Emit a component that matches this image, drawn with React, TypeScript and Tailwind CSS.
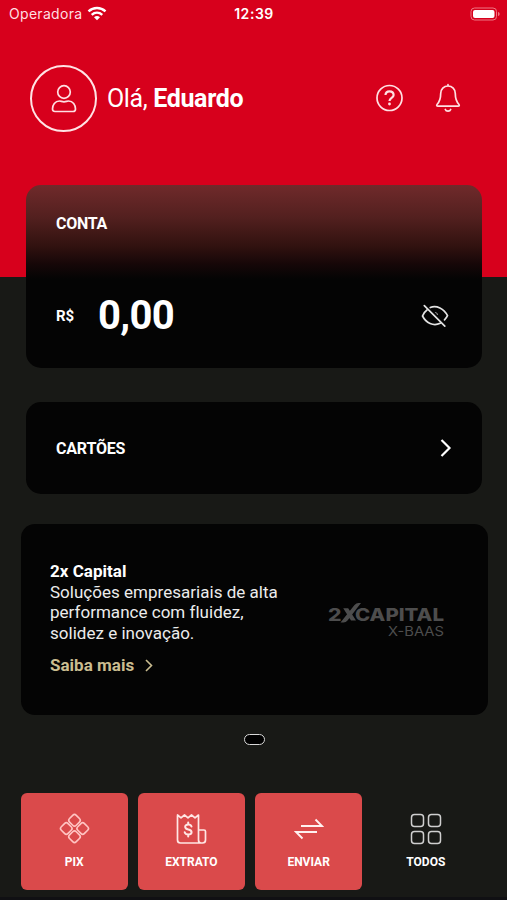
import type { ReactNode } from "react";

function StatusBar() {
  return (
    <div className="grid h-[27px] grid-cols-3 items-center pl-[9px] pr-[6px] font-['Inter',sans-serif] text-[14px] leading-none text-white">
      <div className="flex items-center gap-[5px]">
        <span className="tracking-[0.3px] text-[#ffdfe2]">Operadora</span>
        <svg width="20" height="15" viewBox="0 0 20 15" fill="none" stroke="currentColor" strokeWidth="2.4">
          <path d="M1.5 5.4C6.4.8 13.6.8 18.5 5.4" />
          <path d="M4.7 8.8c3.1-2.7 7.5-2.7 10.6 0" />
          <path d="M7 11.3a4.5 4.5 0 0 1 6 0L10 14.3z" fill="currentColor" stroke="none" />
        </svg>
      </div>
      <span className="pr-[2px] text-center font-semibold tracking-[0.55px]">12:39</span>
      <svg className="justify-self-end" width="31" height="14" viewBox="0 0 31 14" fill="none">
        <rect x="1" y="1" width="25.5" height="12" rx="3.5" stroke="#ee7783" />
        <rect x="3" y="3" width="21.5" height="8" rx="2" fill="white" />
        <path d="M28 5c2.200.6 2.200 3.400 0 4z" fill="#ee7783" />
      </svg>
    </div>
  );
}

function Action({ label, filled = true, children }: { label: string; filled?: boolean; children: ReactNode }) {
  return (
    <button
      className={`flex h-[97px] w-[107.500px] flex-col items-center rounded-[6px] pt-[18px] text-[12px] font-bold leading-[14px] text-white ${filled ? "bg-[#da4a4b]" : ""}`}
    >
      <span className="flex h-9 items-center justify-center">{children}</span>
      <span className="mt-[8px]">{label}</span>
    </button>
  );
}

export default function App() {
  return (
    <div className="flex h-[900px] w-[507px] flex-col overflow-hidden border-b-[3px] border-[#101013] bg-[#181916] font-['Roboto',sans-serif] text-white">
      <header className="h-[277px] shrink-0 bg-[#d7001c]">
        <StatusBar />
        <div className="mt-[37px] flex h-[68px] items-center pl-[30px] pr-[45px]">
          <div className="flex size-[67px] items-center justify-center rounded-full border-2 border-[#ffe3e5]">
            <svg className="mt-px" width="26" height="30" viewBox="0 0 26 30" fill="none" stroke="#ffe0e3" strokeWidth="1.7">
              <circle cx="13" cy="8" r="6.3" />
              <path d="M8.500 17c1.500 0 2.500.8 4.500.8s3-.8 4.500-.8c4.500 0 7 4 7 8 0 1.800-1 2.500-2.500 2.500H4C2.500 27.500 1.500 26.800 1.500 25c0-4 2.500-8 7-8z" />
            </svg>
          </div>
          <h1 className="ml-[10px] mt-[2px] flex-1 text-[25px] font-normal tracking-[-0.350px]">
            Olá, <b className="font-bold">Eduardo</b>
          </h1>
          <svg width="28" height="28" viewBox="0 0 28 28" fill="none" stroke="#ffe0e3" strokeWidth="1.700">
            <circle cx="14.500" cy="14" r="12.500" />
            <path d="M10.500 11c.1-2.400 1.700-3.700 4-3.700s4.100 1.400 4.100 3.600c0 3-4.100 2.900-4.100 6.100" strokeWidth="2.200" />
            <circle cx="14.500" cy="20" r="1.400" fill="#ffe0e3" stroke="none" />
          </svg>
          <svg className="ml-[31px]" width="28" height="30" viewBox="0 0 28 30" fill="none" stroke="#ffe0e3" strokeWidth="1.700" strokeLinejoin="round" strokeLinecap="round">
            <path d="M14 3C9.800 3 6.700 6 6.700 10.500c0 5-.6 7.500-3.500 10.700-.9 1-.5 2 .8 2h20c1.300 0 1.700-1 .8-2-2.900-3.200-3.500-5.700-3.500-10.700C21.300 6 18.200 3 14 3zM14 1.700V3" />
            <path d="M11.300 26.500c.8 2.200 4.600 2.200 5.400 0" />
          </svg>
        </div>
      </header>

      <section className="mx-[26px] -mt-[92px] h-[183px] w-[456px] shrink-0 rounded-[15px] bg-[linear-gradient(180deg,#702a2b_0px,#53201f_32px,#30110f_62px,#160708_79px,#040404_94px)] pl-[30px] pr-[33px] pt-[29px]">
        <h2 className="text-[16px] font-bold leading-[20px] tracking-[-0.3px]">CONTA</h2>
        <div className="mt-[57px] flex h-[50px] items-center">
          <span className="w-[42px] text-[15px] font-bold">R$</span>
          <span className="flex-1 text-[40px] font-bold leading-none tracking-[-0.7px]">0,00</span>
          <svg width="28" height="24" viewBox="0 0 28 24" fill="none" stroke="#e3e3e3" strokeWidth="1.700" strokeLinecap="round">
            <path d="M9.200 3.500C15.500.9 23 4.700 26.500 11.700c-.7 1.500-1.700 2.900-3 4.100M19.200 19.300C12.300 22.500 5 19 1.500 12c.9-2.500 2.400-4.500 4.500-6" />
            <path d="m3.300 1.700 20.500 20.500" />
            <path d="M14.500 8.500c1 .3 1.700 1 2 2" stroke="#888" strokeWidth="1.200" />
          </svg>
        </div>
      </section>

      <section className="mx-[26px] mt-[34px] flex h-[92px] w-[456px] shrink-0 items-center justify-between rounded-[15px] bg-[#040404] pl-[30px] pr-[30px]">
        <h2 className="pt-px text-[16px] font-bold tracking-[-0.200px]">CARTÕES</h2>
        <svg width="12" height="18" viewBox="0 0 12 18" fill="none" stroke="white" strokeWidth="2.200">
          <path d="m1.500 1 8 8-8 8" />
        </svg>
      </section>

      <section className="ml-[20.500px] mt-[29.500px] flex h-[191px] w-[467px] shrink-0 rounded-[14px] bg-[#040404] pl-[29.500px] pr-[42.500px] pt-[37.500px]">
        <div className="flex-1 whitespace-nowrap text-[17px] leading-[20.600px] tracking-[0.02px] text-[#ececec]">
          <h2 className="font-bold text-white">2x Capital</h2>
          <p>
            Soluções empresariais de alta
            <br />
            performance com fluidez,
            <br />
            solidez e inovação.
          </p>
          <a className="mt-[12px] flex items-center gap-[11px] font-bold text-[#cabd90]">
            Saiba mais
            <svg width="8" height="13" viewBox="0 0 8 13" fill="none" stroke="currentColor" strokeWidth="1.600">
              <path d="m1 1 5.500 5.500L1 12" />
            </svg>
          </a>
        </div>
        <svg className="mt-[38px]" width="117" height="40" viewBox="0 0 117 40" fill="#4d4d4d" fontFamily="Inter, sans-serif">
          <text x="0" y="21.500" fontSize="17" fontWeight="800" textLength="13.500" lengthAdjust="spacingAndGlyphs">2</text>
          <path d="M12.500 23.500 26.500 6Q28.300 4 30.500 4H33L19.500 21.500Q18 23.500 15.500 23.500zM15.200 9.200h5L28 21.500h-5z" />
          <text x="27" y="21.500" fontSize="17" fontWeight="800" textLength="89" lengthAdjust="spacingAndGlyphs">CAPITAL</text>
          <text x="60" y="36.500" fontSize="13.500" fontWeight="400" textLength="56" lengthAdjust="spacingAndGlyphs">X-BAAS</text>
        </svg>
      </section>

      <div className="ml-[243.500px] mt-[19px] h-[11px] w-[21px] shrink-0 rounded-full border-[1.500px] border-[#d8d8d8] bg-black" />

      <nav className="ml-[20.500px] mt-[48px] flex gap-[9.700px]">
        <Action label="PIX">
          <svg width="31" height="31" viewBox="0 0 32 32" fill="none" stroke="#ffc4c2" strokeWidth="1.700">
            <g transform="rotate(45 16 16)">
              <rect x="5.100" y="5.100" width="9.800" height="9.800" rx="2.600" />
              <rect x="17.100" y="5.100" width="9.800" height="9.800" rx="2.600" />
              <rect x="5.100" y="17.100" width="9.800" height="9.800" rx="2.600" />
              <rect x="17.100" y="17.100" width="9.800" height="9.800" rx="2.600" />
            </g>
          </svg>
        </Action>
        <Action label="EXTRATO">
          <svg width="31" height="32" viewBox="0 0 31 32" fill="none" stroke="#ffe7e5" strokeWidth="1.700" strokeLinejoin="round" strokeLinecap="round">
            <path d="M1.500 2v25c0 2 1 3 3 3h22c2 0 3-1 3-3V18.500c0-1-.5-1.500-1.500-1.500h-5.500M22.500 27V2L19 4.800 15.500 2 12 4.800 8.500 2 5 4.800 1.500 2M22.500 27q0 3 2.500 3" />
            <path d="M15.500 13.500c-.5-1.500-1.600-2-3.200-2-4.300 0-4 4.300-.1 4.900 4.700.7 4.300 5.100 0 5.100-1.900 0-3-.7-3.500-2.200M12.200 9.500v2M12.200 21.500v2" strokeWidth="2" />
          </svg>
        </Action>
        <Action label="ENVIAR">
          <svg width="30" height="22" viewBox="0 0 30 22" fill="none" stroke="#fff1f0" strokeWidth="1.900">
            <path d="M7 8h21l-6.500-6.500M23 14H2l6.500 6.500" />
          </svg>
        </Action>
        <Action label="TODOS" filled={false}>
          <svg width="32" height="32" viewBox="0 0 32 32" fill="none" stroke="#cfcfcf" strokeWidth="1.500">
            <rect x="1.500" y="1.500" width="12" height="12" rx="3" />
            <rect x="18.500" y="1.500" width="12" height="12" rx="3" />
            <rect x="1.500" y="18.500" width="12" height="12" rx="3" />
            <rect x="18.500" y="18.500" width="12" height="12" rx="3" />
          </svg>
        </Action>
      </nav>
    </div>
  );
}
